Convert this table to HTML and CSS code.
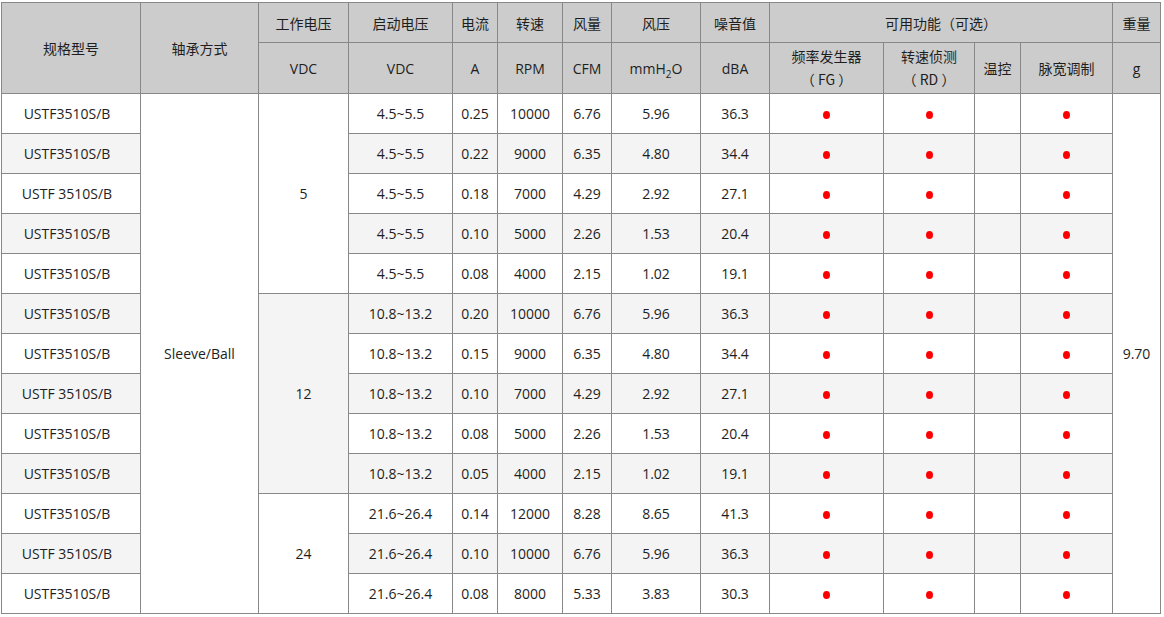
FILE: index.html
```html
<!DOCTYPE html>
<html lang="zh">
<head>
<meta charset="utf-8">
<title>USTF3510S/B</title>
<link rel="stylesheet" href="styles.css">
</head>
<body>
<table class="spec">
  <colgroup>
    <col class="c1"><col class="c2"><col class="c3"><col class="c4"><col class="c5"><col class="c6"><col class="c7">
    <col class="c8"><col class="c9"><col class="c10"><col class="c11"><col class="c12"><col class="c13"><col class="c14">
  </colgroup>
  <thead>
    <tr class="h1">
      <th rowspan="2">规格型号</th>
      <th rowspan="2">轴承方式</th>
      <th>工作电压</th>
      <th>启动电压</th>
      <th>电流</th>
      <th>转速</th>
      <th>风量</th>
      <th>风压</th>
      <th>噪音值</th>
      <th colspan="4">可用功能（可选）</th>
      <th>重量</th>
    </tr>
    <tr class="h2">
      <th>VDC</th>
      <th>VDC</th>
      <th>A</th>
      <th>RPM</th>
      <th>CFM</th>
      <th>mmH<sub>2</sub>O</th>
      <th>dBA</th>
      <th class="two">频率发生器<br>（ FG ）</th>
      <th class="two">转速侦测<br>（ RD ）</th>
      <th>温控</th>
      <th>脉宽调制</th>
      <th>g</th>
    </tr>
  </thead>
  <tbody>
    <tr><td class="model">USTF3510S/B</td><td rowspan="13" class="grey">Sleeve/Ball</td><td rowspan="5" class="white">5</td><td>4.5~5.5</td><td>0.25</td><td>10000</td><td>6.76</td><td>5.96</td><td>36.3</td><td><span class="dot"></span></td><td><span class="dot"></span></td><td></td><td><span class="dot"></span></td><td rowspan="13" class="grey">9.70</td></tr>
    <tr><td class="model">USTF3510S/B</td><td>4.5~5.5</td><td>0.22</td><td>9000</td><td>6.35</td><td>4.80</td><td>34.4</td><td><span class="dot"></span></td><td><span class="dot"></span></td><td></td><td><span class="dot"></span></td></tr>
    <tr><td class="model">USTF 3510S/B</td><td>4.5~5.5</td><td>0.18</td><td>7000</td><td>4.29</td><td>2.92</td><td>27.1</td><td><span class="dot"></span></td><td><span class="dot"></span></td><td></td><td><span class="dot"></span></td></tr>
    <tr><td class="model">USTF3510S/B</td><td>4.5~5.5</td><td>0.10</td><td>5000</td><td>2.26</td><td>1.53</td><td>20.4</td><td><span class="dot"></span></td><td><span class="dot"></span></td><td></td><td><span class="dot"></span></td></tr>
    <tr><td class="model">USTF3510S/B</td><td>4.5~5.5</td><td>0.08</td><td>4000</td><td>2.15</td><td>1.02</td><td>19.1</td><td><span class="dot"></span></td><td><span class="dot"></span></td><td></td><td><span class="dot"></span></td></tr>
    <tr><td class="model">USTF3510S/B</td><td rowspan="5" class="grey">12</td><td>10.8~13.2</td><td>0.20</td><td>10000</td><td>6.76</td><td>5.96</td><td>36.3</td><td><span class="dot"></span></td><td><span class="dot"></span></td><td></td><td><span class="dot"></span></td></tr>
    <tr><td class="model">USTF3510S/B</td><td>10.8~13.2</td><td>0.15</td><td>9000</td><td>6.35</td><td>4.80</td><td>34.4</td><td><span class="dot"></span></td><td><span class="dot"></span></td><td></td><td><span class="dot"></span></td></tr>
    <tr><td class="model">USTF 3510S/B</td><td>10.8~13.2</td><td>0.10</td><td>7000</td><td>4.29</td><td>2.92</td><td>27.1</td><td><span class="dot"></span></td><td><span class="dot"></span></td><td></td><td><span class="dot"></span></td></tr>
    <tr><td class="model">USTF3510S/B</td><td>10.8~13.2</td><td>0.08</td><td>5000</td><td>2.26</td><td>1.53</td><td>20.4</td><td><span class="dot"></span></td><td><span class="dot"></span></td><td></td><td><span class="dot"></span></td></tr>
    <tr><td class="model">USTF3510S/B</td><td>10.8~13.2</td><td>0.05</td><td>4000</td><td>2.15</td><td>1.02</td><td>19.1</td><td><span class="dot"></span></td><td><span class="dot"></span></td><td></td><td><span class="dot"></span></td></tr>
    <tr><td class="model">USTF3510S/B</td><td rowspan="3" class="white">24</td><td>21.6~26.4</td><td>0.14</td><td>12000</td><td>8.28</td><td>8.65</td><td>41.3</td><td><span class="dot"></span></td><td><span class="dot"></span></td><td></td><td><span class="dot"></span></td></tr>
    <tr><td class="model">USTF 3510S/B</td><td>21.6~26.4</td><td>0.10</td><td>10000</td><td>6.76</td><td>5.96</td><td>36.3</td><td><span class="dot"></span></td><td><span class="dot"></span></td><td></td><td><span class="dot"></span></td></tr>
    <tr><td class="model">USTF3510S/B</td><td>21.6~26.4</td><td>0.08</td><td>8000</td><td>5.33</td><td>3.83</td><td>30.3</td><td><span class="dot"></span></td><td><span class="dot"></span></td><td></td><td><span class="dot"></span></td></tr>
  </tbody>
</table>
</body>
</html>
```

FILE: styles.css
```css
html, body {
  margin: 0;
  padding: 0;
  background: #ffffff;
}

body {
  padding: 2px 0 0 1px;
  font-family: "Open Sans", "Noto Sans CJK SC", sans-serif;
  font-size: 14px;
  color: #1e1e1e;
}

.spec {
  border-collapse: collapse;
  table-layout: fixed;
  width: 1159px;
  border-top: 1px solid #333333;
  border-left: 1px solid #333333;
  border-right: 1px solid #333333;
  border-bottom: 1px solid #888888;
}

.c1 { width: 139px; }
.c2 { width: 118px; }
.c3 { width: 90px; }
.c4 { width: 104px; }
.c5 { width: 45px; }
.c6 { width: 65px; }
.c7 { width: 49px; }
.c8 { width: 89px; }
.c9 { width: 69px; }
.c10 { width: 114px; }
.c11 { width: 91px; }
.c12 { width: 46px; }
.c13 { width: 92px; }
.c14 { width: 48px; }

.spec th,
.spec td {
  border: 1px solid #888888;
  padding: 0;
  text-align: center;
  vertical-align: middle;
  font-weight: normal;
}

.spec th {
  background: #cccccc;
  font-family: "Noto Sans CJK SC", "Open Sans", sans-serif;
}

.spec .h2 th {
  font-family: "Open Sans", "Noto Sans CJK SC", sans-serif;
}

.spec .h2 th.two {
  line-height: 23px;
  font-family: "Noto Sans CJK SC", sans-serif;
}

.h1 { height: 40px; }
.h2 { height: 51px; }

.spec tbody tr { height: 40px; }
.spec tbody tr:nth-child(odd) td { background: #ffffff; }
.spec tbody tr:nth-child(even) td { background: #f4f4f4; }
.spec tbody td.grey { background: #f4f4f4; }
.spec tbody td.white { background: #ffffff; }

.spec tbody td.model {
  padding-right: 8px;
}

sub {
  font-size: 10px;
  vertical-align: -4px;
  line-height: 0;
}

.dot {
  display: inline-block;
  width: 7px;
  height: 8px;
  border-radius: 50%;
  background: #ff0000;
  vertical-align: middle;
}
```
